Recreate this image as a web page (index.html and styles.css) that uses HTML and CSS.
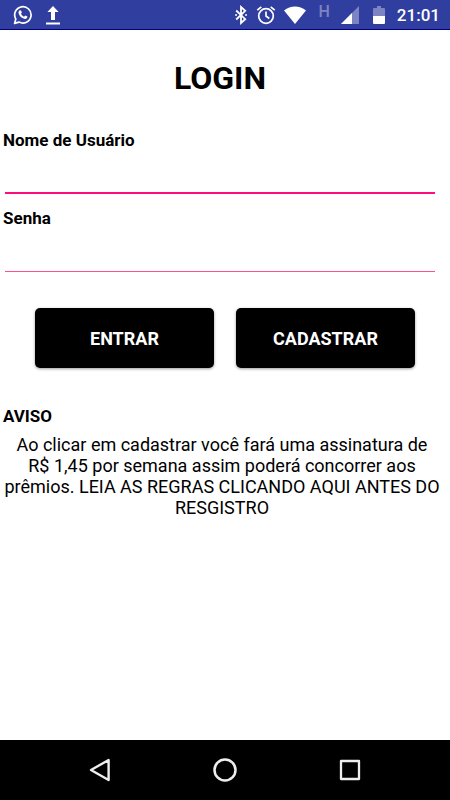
FILE: index.html
```html
<!DOCTYPE html>
<html lang="pt-BR">
<head>
<meta charset="UTF-8" />
<meta name="viewport" content="width=device-width, initial-scale=1" />
<title>Login</title>
<link rel="stylesheet" href="styles.css">
</head>
<body>

<header class="status-bar">
  <div class="status-left">
    <svg width="20" height="20" viewBox="0 0 20 20" fill="none" stroke="#fff" stroke-width="1.7">
      <path d="M1.6 18.4l1.2-4.4a8.2 8.2 0 1 1 3.2 3.1z" stroke-linejoin="round" />
      <path d="M6.7 5.2l1.3.2.9 2.2-.9 1.2c.7 1.4 1.7 2.3 3.1 2.9l1.1-1.2 2.2 1.1c.1 1.6-1.2 2.4-2.5 2.3-3.2-.4-6-3.2-6.4-6.3 0-1 .5-1.9 1.2-2.4z" fill="#fff" stroke="none" />
    </svg>
    <svg width="16" height="20" viewBox="0 0 16 20" fill="#fff">
      <path d="M8 1l5.6 6H10v8H6V7H2.4zM1 17.5h14v2H1z" />
    </svg>
  </div>
  <div class="status-right">
    <svg class="bluetooth" width="12" height="20" viewBox="0 0 12 20" fill="none" stroke="#fff" stroke-width="1.8">
      <path d="M1.2 5.5l9 8.7L6 18V2l4.200 3.800-9 8.700" />
      <path d="M1 10h.1M11 10h.1" stroke-width="1.8" stroke-linecap="round" />
    </svg>
    <svg class="alarm" width="20" height="20" viewBox="0 0 20 20" fill="none" stroke="#fff" stroke-width="1.7">
      <circle cx="10" cy="11" r="7.3" />
      <path d="M10 6.5V11l3.3 2.5M1.300 5.200l4-3.400M18.700 5.200l-4-3.400" />
    </svg>
    <svg class="wifi" width="22" height="20" viewBox="0 0 22 20" fill="#fff">
      <path d="M11 19L0 5.400C6.500.2 15.500.2 22 5.400z" />
    </svg>
    <span class="network">H</span>
    <svg class="signal" width="18" height="20" viewBox="0 0 18 20">
      <path d="M18 1v18H0z" fill="#7c85c2" />
      <path d="M11 8v11H0z" fill="#fff" />
    </svg>
    <svg class="battery" width="12" height="20" viewBox="0 0 12 20">
      <path d="M4 1h4v2h3q1 0 1 1v7H0V4q0-1 1-1h3z" fill="#7c85c2" />
      <path d="M0 11h12v7q0 1-1 1H1q-1 0-1-1z" fill="#fff" />
    </svg>
    <span class="clock">21:01</span>
  </div>
</header>

<main class="content">
  <form id="loginForm" class="login-form">
    <h1>LOGIN</h1>

    <label for="username">Nome de Usuário</label>
    <input type="text" id="username" name="username" class="field active" />

    <label for="password">Senha</label>
    <input type="password" id="password" name="password" class="field" />

    <div class="buttons">
      <button type="submit">ENTRAR</button>
      <button type="button">CADASTRAR</button>
    </div>
  </form>

  <section class="notice">
    <h2>AVISO</h2>
    <p>Ao clicar em cadastrar você fará uma assinatura de R$ 1,45 por semana assim poderá concorrer aos prêmios. LEIA AS REGRAS CLICANDO AQUI ANTES DO RESGISTRO</p>
  </section>
</main>

<nav class="nav-bar">
  <button type="button" aria-label="Voltar">
    <svg width="24" height="26" viewBox="0 0 24 26" fill="none" stroke="#eee" stroke-width="2.4" stroke-linejoin="round">
      <path d="M20.6 3v20L3 13z" />
    </svg>
  </button>
  <button type="button" aria-label="Início">
    <svg width="26" height="26" viewBox="0 0 26 26" fill="none" stroke="#eee" stroke-width="2.5">
      <circle cx="13" cy="13" r="10.5" />
    </svg>
  </button>
  <button type="button" aria-label="Recentes">
    <svg width="24" height="26" viewBox="0 0 24 26" fill="none" stroke="#eee" stroke-width="2.3" stroke-linejoin="round">
      <path d="M3 4h18v18H3z" />
    </svg>
  </button>
</nav>

</body>
</html>
```
FILE: styles.css
```css
body {
  font-family: Roboto, sans-serif;
  font-size: 18px;
  background: #fff;
  color: #000;
  margin: 0;
  min-height: 100vh;
  display: flex;
  flex-direction: column;
}
svg {
  display: block;
}

.status-bar {
  display: flex;
  justify-content: space-between;
  align-items: center;
  box-sizing: border-box;
  height: 30px;
  padding: 0 10px 0 13px;
  background: #303f9f;
  border-bottom: 1px solid #000080;
  color: #fff;
}
.status-left,
.status-right {
  display: flex;
  align-items: center;
}
.status-left {
  gap: 12px;
}
.alarm {
  margin-left: 9px;
}
.wifi {
  margin-left: 8px;
}
.network {
  margin-left: 13px;
  align-self: flex-start;
  font-size: 16px;
  line-height: 16px;
  font-weight: 500;
  color: #7c85c2;
}
.signal {
  margin-left: 11px;
}
.battery {
  margin-left: 14px;
}
.clock {
  margin-left: 12px;
  font-size: 17px;
  line-height: 22px;
  font-weight: 500;
}

.content {
  flex: 1;
  padding: 29px 10px 20px 0;
}
h1 {
  margin: 0 0 32px;
  font-size: 32px;
  line-height: 38px;
  text-align: center;
}
label,
h2 {
  display: block;
  margin: 0;
  padding-left: 3px;
  font-size: 17px;
  line-height: 22px;
  font-weight: bold;
}
.field {
  display: block;
  box-sizing: border-box;
  width: calc(100% - 10px);
  height: 43px;
  margin: 0 5px 13px;
  padding: 0 4px;
  border: none;
  border-bottom: 1px solid #ff4f8c;
  border-radius: 0;
  background: none;
  font: inherit;
  outline: none;
}
.field.active {
  border-bottom: 2px solid #ff0c80;
}
.buttons {
  display: flex;
  gap: 22px;
  padding: 23px 25px 0 35px;
}
.buttons button {
  flex: 1;
  height: 60px;
  padding: 0;
  border: none;
  border-radius: 5px;
  background: #000;
  color: #fff;
  font: inherit;
  font-weight: bold;
  box-shadow: 0 1px 3px rgba(0,0,0,0.4);
  cursor: pointer;
}
.notice {
  margin-top: 37px;
}
.notice p {
  margin: 7px 0 0;
  padding-left: 4px;
  line-height: 21px;
  text-align: center;
}

.nav-bar {
  display: flex;
  justify-content: center;
  height: 60px;
  background: #000;
}
.nav-bar button {
  display: flex;
  align-items: center;
  justify-content: center;
  width: 125px;
  padding: 0;
  border: none;
  background: none;
  cursor: pointer;
}
```
